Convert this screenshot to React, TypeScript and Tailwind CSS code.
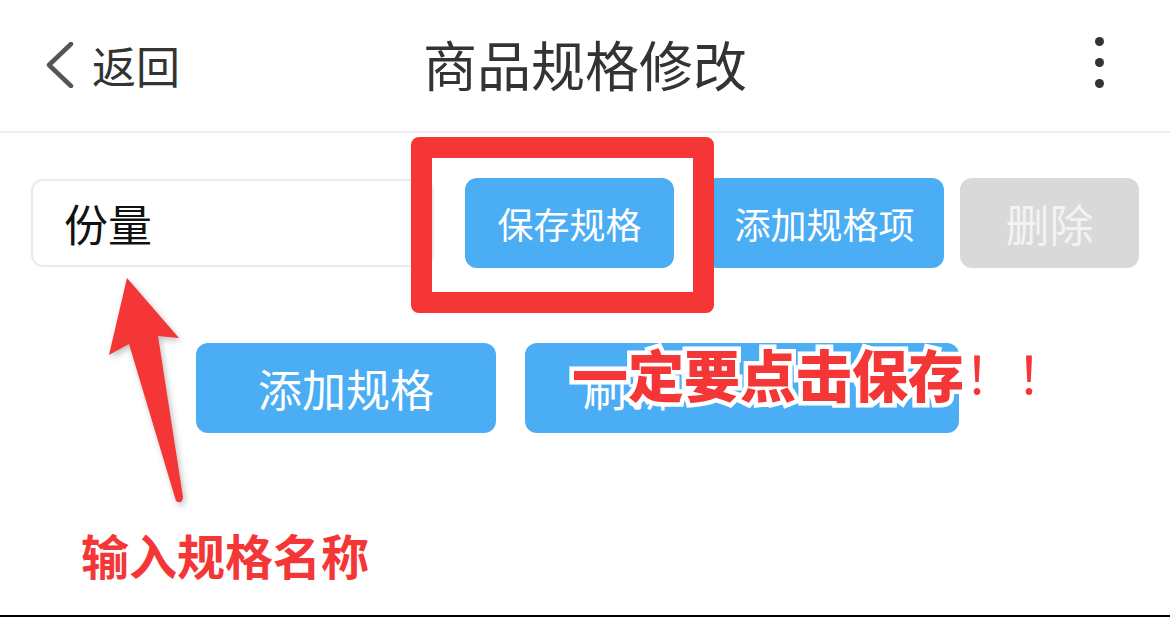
import React from "react";

const FONT = '"Noto Sans CJK SC", "Noto Sans", sans-serif';

export default function App() {
  return (
    <div
      className="relative w-full h-[617px] bg-white border-b-2 border-black overflow-hidden"
      style={{ fontFamily: FONT }}
    >
      {/* Header */}
      <div className="h-[133px] border-b-2 border-[#eeeeee] grid grid-cols-[1fr_auto_1fr] items-center">
        <div className="flex items-center pl-[45px] gap-[18px] -mt-[2px]">
          <svg width="29" height="46" viewBox="0 0 29 46" fill="none">
            <path d="M26 2 L4 23 L26 44" stroke="#555555" strokeWidth="4.5" strokeLinecap="round" strokeLinejoin="round" />
          </svg>
          <span className="text-[44px] leading-none text-[#333333]">返回</span>
        </div>
        <div className="text-[54px] leading-none text-[#333333] -mt-[4px]">商品规格修改</div>
        <div className="flex justify-end pr-[66px] -mt-[6px]">
          <div className="flex flex-col gap-[12px]">
            <div className="w-[9px] h-[9px] rounded-full bg-[#333333]" />
            <div className="w-[9px] h-[9px] rounded-full bg-[#333333]" />
            <div className="w-[9px] h-[9px] rounded-full bg-[#333333]" />
          </div>
        </div>
      </div>

      {/* Row 1 */}
      <div className="flex items-center pl-[31px] mt-[45px] h-[90px]">
        <div className="w-[403px] h-[88px] border-2 border-[#ebebeb] rounded-[12px] flex items-center pl-[31px]">
          <span className="text-[44px] leading-none text-[#111111]">份量</span>
        </div>
        <div className="ml-[31px] w-[209px] h-[90px] rounded-[12px] bg-[#4badf4] flex items-center justify-center">
          <span className="text-[36px] leading-none text-white">保存规格</span>
        </div>
        <div className="ml-[31px] w-[239px] h-[90px] rounded-[12px] bg-[#4badf4] flex items-center justify-center">
          <span className="text-[36px] leading-none text-white">添加规格项</span>
        </div>
        <div className="ml-[16px] w-[179px] h-[90px] rounded-[12px] bg-[#d9d9d9] flex items-center justify-center">
          <span className="text-[44px] leading-none text-[#f3f3f3]">删除</span>
        </div>
      </div>

      {/* Row 2 */}
      <div className="flex items-center pl-[196px] mt-[75px] h-[90px]">
        <div className="w-[300px] h-[90px] rounded-[12px] bg-[#4badf4] flex items-center justify-center">
          <span className="text-[44px] leading-none text-white">添加规格</span>
        </div>
        <div className="ml-[29px] w-[434px] h-[90px] rounded-[12px] bg-[#4badf4] flex items-center pl-[58px]">
          <span className="text-[44px] leading-none text-white">刷新</span>
        </div>
      </div>

      {/* Label */}
      <div className="pl-[81px] mt-[97px]">
        <span className="text-[48px] leading-none font-bold text-[#f43636]">输入规格名称</span>
      </div>

      {/* Red highlight box */}
      <div className="absolute left-[411px] top-[137px] w-[303px] h-[176px] border-[21px] border-[#f43636] rounded-[8px]" />

      {/* Arrow */}
      <svg
        className="absolute left-0 top-0 [filter:drop-shadow(2px_3px_3px_rgba(0,0,0,0.25))]"
        width="260"
        height="520"
        viewBox="0 0 260 520"
      >
        <path
          d="M127 278 L179 338 L158 336 L183 497 Q182 505 176 501 L129 344 L109 355 Z"
          fill="#f43636"
        />
      </svg>

      {/* Overlay text */}
      <div className="absolute left-[572px] top-[345px] flex items-center leading-none">
        <span className="text-[56px] font-black text-[#f43636] [paint-order:stroke_fill] [-webkit-text-stroke:9px_white]">
          一定要点击保存
        </span>
        <span className="text-[52px] font-normal text-[#f43636]">！！</span>
      </div>
    </div>
  );
}
